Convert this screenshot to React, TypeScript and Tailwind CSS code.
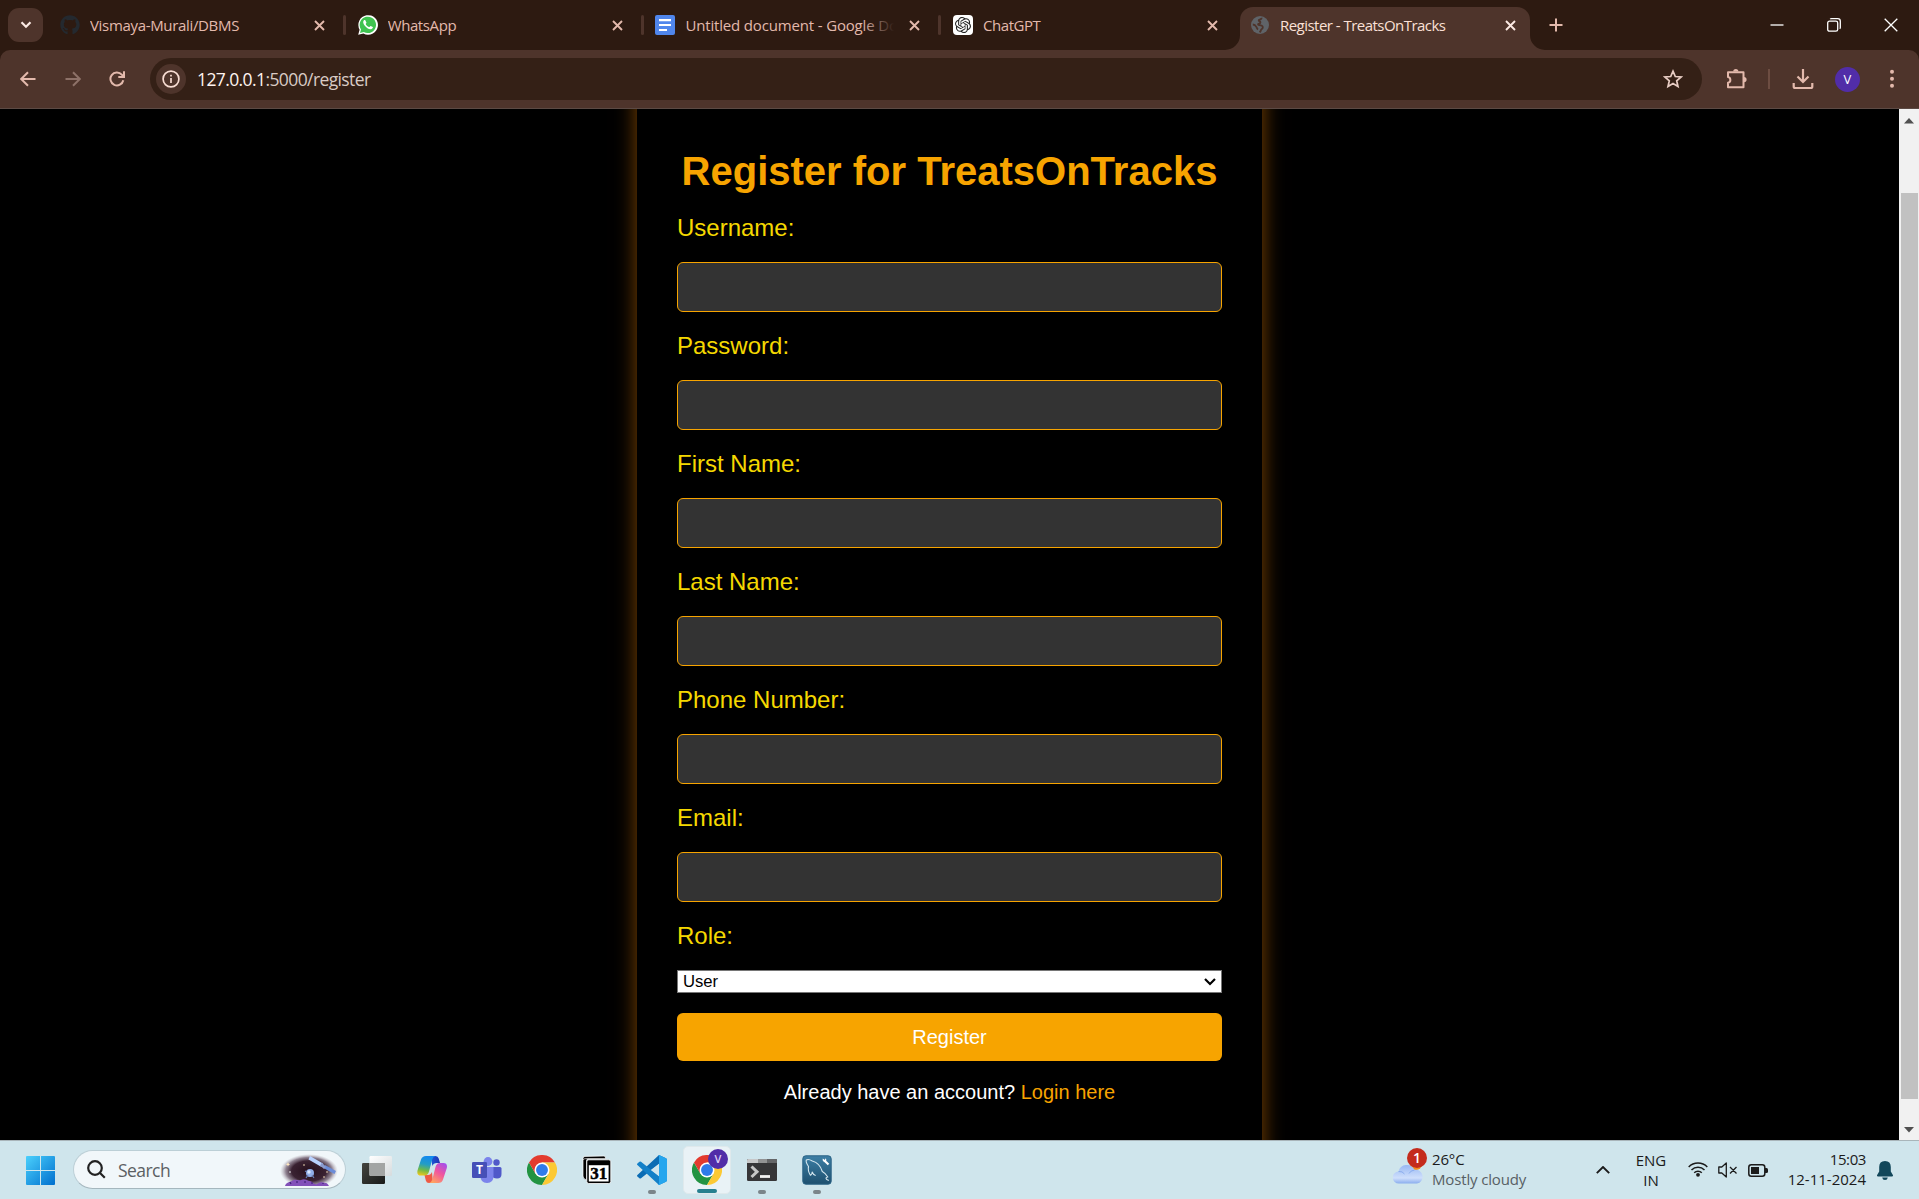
import React from "react";
import { FaGithub } from "react-icons/fa";
import { SiOpenai } from "react-icons/si";

const uiFont = "font-['Open_Sans','Noto_Sans',sans-serif]";
const pageFont = "font-['Liberation_Sans',Arial,sans-serif]";

function Cross({ className }: { className: string }) {
  return (
    <svg className={className} width="11" height="11" viewBox="0 0 11 11" fill="none" stroke="currentColor" strokeWidth="1.9">
      <path d="M1 1l9 9M10 1l-9 9" />
    </svg>
  );
}

function WhatsAppIcon() {
  return (
    <svg width="20" height="20" viewBox="0 0 20 20">
      <path d="M0.2 19.8l1.4-5.1A9.8 9.8 0 1 1 5.400 18.500z" fill="#fff" />
      <path d="M2 18l1-3.600A8.200 8.200 0 1 1 5.800 17z" fill="#3fc350" />
      <path d="M7.300 5.300c-.3-.5-1-.5-1.400 0-1.300 1.400-.7 3.500.9 5.500 1.800 2.300 4.700 4.200 6.800 3.300 1-.5 1.500-1.700 1.200-2.100l-2.100-1.100c-.6-.1-.9 1.200-1.500 1.200-1.100-.2-3.200-2.100-3.500-3.200 0-.5.900-.9.700-1.500z" fill="#fff" />
    </svg>
  );
}

function DocsIcon() {
  return (
    <svg width="20" height="20" viewBox="0 0 20 20">
      <rect width="20" height="20" rx="2" fill="#5086ec" />
      <path d="M4 5.200h12M4 10h12M4 15h8" stroke="#fff" strokeWidth="2.200" />
    </svg>
  );
}

function GlobeIcon() {
  return (
    <svg width="18" height="18" viewBox="0 0 18 18">
      <circle cx="9" cy="9" r="9" fill="#5f6368" />
      <path d="M10.500 1.800c.3 1.200-.8 1.500-2 1.900-1.300.4-.8 1.500.2 1.700 1.300.3.600 2.200-.6 2.300-1.500.1-1.300 1.400 0 1.500 2.300.1 3.800.5 3.700 2.300-.1 1.600-1.600 1.200-1.900 2.700-.2.900-.6 1.500-1.300 2.200M1.800 8.500c1.600 0 3 1.300 3.700 2.600.5 1 .6 1.900 1.600 2.400" fill="none" stroke="#4e342b" strokeWidth="1.800" />
    </svg>
  );
}

function Tab({ icon, title, fade, divider = true, track }: { icon: React.ReactNode; title: string; fade?: boolean; divider?: boolean; track: string }) {
  return (
    <div className="flex h-[50px] w-[297.700px] shrink-0 items-center">
      <div className="flex w-5 justify-center">{icon}</div>
      <div className="relative ml-[10px] w-[209px] overflow-hidden text-[15px] leading-5 whitespace-nowrap text-[#e3b9ac]">
        <span className={track}>{title}</span>
        {fade && <div className="absolute top-0 right-0 h-5 w-8 bg-gradient-to-r from-transparent to-[#2d1a11]" />}
      </div>
      <Cross className="ml-[15px] shrink-0 text-[#e3b9ac]" />
      {divider && <div className="ml-[18px] h-5 w-[3px] rounded-full bg-[#4e342b]" />}
    </div>
  );
}

function TabStrip() {
  return (
    <div className="flex h-[50px] bg-[#2d1a11] pl-2">
      <button className="mt-2 flex h-[34px] w-[35px] items-center justify-center rounded-[11px] bg-[#4e342b]">
        <svg width="12" height="8" viewBox="0 0 12 8" fill="none" stroke="#fbe9e3" strokeWidth="2.200">
          <path d="M1.500 1.300L6 5.800l4.500-4.500" />
        </svg>
      </button>
      <div className="ml-[17px] flex w-[1180px]">
        <Tab icon={<FaGithub size={20} color="#24292f" />} title="Vismaya-Murali/DBMS" track="tracking-[-0.33px]" />
        <Tab icon={<WhatsAppIcon />} title="WhatsApp" track="tracking-[-0.4px]" />
        <Tab icon={<DocsIcon />} title="Untitled document - Google Do" fade track="tracking-[-0.16px]" />
        <Tab
          icon={
            <div className="flex size-5 shrink-0 items-center justify-center rounded-[4px] bg-white">
              <SiOpenai size={16} color="#222" />
            </div>
          }
          title="ChatGPT"
          divider={false}
          track="tracking-[-0.45px]"
        />
      </div>
      <div className="relative mt-[7px] flex h-[43px] w-[290px] items-center rounded-t-[13px] bg-[#4e342b] pb-[7px] pl-[11px]">
        <svg className="absolute bottom-0 -left-[15px]" width="15" height="15" viewBox="0 0 15 15">
          <path d="M15 0v15H0A15 15 0 0 0 15 0z" fill="#4e342b" />
        </svg>
        <svg className="absolute -right-[15px] bottom-0" width="15" height="15" viewBox="0 0 15 15">
          <path d="M0 0v15h15A15 15 0 0 1 0 0z" fill="#4e342b" />
        </svg>
        <GlobeIcon />
        <div className="ml-[11px] w-[225px] text-[15px] leading-5 tracking-[-0.53px] whitespace-nowrap text-[#fbe0d6]">Register - TreatsOnTracks</div>
        <Cross className="text-[#fbe9e3]" />
      </div>
      <svg className="mt-[18px] ml-[19px]" width="14" height="14" viewBox="0 0 14 14" stroke="#e3b9ac" strokeWidth="2">
        <path d="M7 .5v13M.5 7h13" />
      </svg>
      <div className="mr-[21px] ml-auto flex h-[49px] items-center gap-[43px] text-white">
        <svg width="14" height="14" viewBox="0 0 14 14" stroke="currentColor" strokeWidth="1.300">
          <path d="M.5 7h13" />
        </svg>
        <svg width="14" height="14" viewBox="0 0 14 14" fill="none" stroke="currentColor" strokeWidth="1.300">
          <rect x=".7" y="3.200" width="10" height="10" rx="1.800" />
          <path d="M3.200 1.200Q3.600.7 4.500.7h6.200q2.600 0 2.600 2.600v6.300q0 .8-.6 1.200" />
        </svg>
        <svg width="14" height="14" viewBox="0 0 14 14" stroke="currentColor" strokeWidth="1.300">
          <path d="M.7.700l12.600 12.600M13.300.700L.7 13.300" />
        </svg>
      </div>
    </div>
  );
}

function Toolbar() {
  return (
    <div className="bg-[#2d1a11]">
      <div className="flex h-[59px] items-center rounded-t-[10px] border-b border-[#5c4a44] bg-[#4e342b] pl-5">
        <svg width="16" height="16" viewBox="0 0 16 16" fill="none" stroke="#e3b9ac" strokeWidth="2">
          <path d="M15.500 8H1.500M8 1.200L1.200 8 8 14.800" />
        </svg>
        <svg className="ml-[29px]" width="16" height="16" viewBox="0 0 16 16" fill="none" stroke="#8d7168" strokeWidth="2">
          <path d="M.5 8h14M8 1.200L14.800 8 8 14.800" />
        </svg>
        <svg className="ml-[28px]" width="16" height="16" viewBox="0 0 16 16" fill="none" stroke="#e3b9ac" strokeWidth="2">
          <path d="M14.300 9.300A6.500 6.500 0 1 1 12.800 3.600L14.500 5.600M15 .3v5.700H9.300" />
        </svg>
        <div className="ml-[25px] flex h-[42px] w-[1552px] items-center rounded-full bg-[#342016] pl-[6px]">
          <div className="flex size-[30px] items-center justify-center rounded-full bg-[#4e342b]">
            <svg width="18" height="18" viewBox="0 0 18 18" fill="none" stroke="#f8ddd3" strokeWidth="1.700">
              <circle cx="9" cy="9" r="7.900" />
              <path d="M9 8v5M9 4.700v1.900" />
            </svg>
          </div>
          <div className="ml-[11px] text-[17.500px] leading-6 tracking-[-0.6px] text-[#d9cbc5]">
            <span className="text-[#fff4f0]">127.0.0.1</span>:5000/register
          </div>
          <svg className="mr-[19px] ml-auto" width="20" height="20" viewBox="0 0 20 20" fill="none" stroke="#e8cdc4" strokeWidth="1.700">
            <path d="M10 2.200l2.300 5.300 5.800.5-4.400 3.800 1.300 5.700-5-3-5 3 1.300-5.700L1.900 8l5.800-.5z" />
          </svg>
        </div>
        <svg className="ml-[24px]" width="22" height="22" viewBox="0 0 22 22">
          <path d="M2 4.300h15.500v14.900H2v-4.400a2.900 2.900 0 0 0 0-5.700z" fill="none" stroke="#e3b9ac" strokeWidth="2" strokeLinejoin="round" />
          <path d="M7.200 3.600a2.600 2.600 0 0 1 5.200 0zM18 9a2.600 2.600 0 0 1 0 5.200z" fill="#e3b9ac" />
        </svg>
        <div className="ml-[20px] h-5 w-[2px] bg-[#6d4d42]" />
        <svg className="ml-[22px]" width="22" height="22" viewBox="0 0 22 22" fill="none" stroke="#e3b9ac" strokeWidth="2.200">
          <path d="M11 1v12.500M5.500 8.500l5.500 5.500 5.500-5.500M1.700 15v3.500q0 1.500 1.500 1.500h15.600q1.500 0 1.500-1.500V15" />
        </svg>
        <div className="ml-[21px] flex size-[25px] items-center justify-center rounded-full bg-[#512da8] text-[13px] leading-none text-white">V</div>
        <svg className="ml-[30px]" width="4" height="20" viewBox="0 0 4 20" fill="#e3b9ac">
          <circle cx="2" cy="2.800" r="2" />
          <circle cx="2" cy="9.800" r="2" />
          <circle cx="2" cy="16.800" r="2" />
        </svg>
      </div>
    </div>
  );
}

const fields = [
  { label: "Username:", type: "text" },
  { label: "Password:", type: "password" },
  { label: "First Name:", type: "text" },
  { label: "Last Name:", type: "text" },
  { label: "Phone Number:", type: "text" },
  { label: "Email:", type: "email" },
];

function RegisterPage() {
  return (
    <div className={`flex h-[1031px] overflow-hidden bg-black ${pageFont}`}>
      <main className="flex flex-1 justify-center overflow-hidden">
        <div className="-my-10 w-[625px] bg-black px-10 pt-[79px] shadow-[0_0_20px_rgba(255,140,0,0.5)]">
          <h1 className="text-center text-[40px] leading-[46px] font-bold whitespace-nowrap text-[#f7a400]">Register for TreatsOnTracks</h1>
          <form className="mt-5">
            {fields.map((field) => (
              <label key={field.label} className="mb-5 block">
                <span className="block h-12 text-[24px] leading-7 text-[#f5d800]">{field.label}</span>
                <input type={field.type} className="block h-[50px] w-full rounded-[6px] border border-[#f7a400] bg-[#333] px-3 text-white" />
              </label>
            ))}
            <label className="block">
              <span className="block h-12 text-[24px] leading-7 text-[#f5d800]">Role:</span>
              <span className="relative block">
                <select className="block h-[23px] w-full appearance-none border border-[#767676] bg-white pl-[5px] text-[16.670px] leading-[21px] text-black">
                  <option>User</option>
                </select>
                <svg className="pointer-events-none absolute top-[8px] right-[6px]" width="12" height="8" viewBox="0 0 12 8" fill="none" stroke="#000" strokeWidth="2.200">
                  <path d="M1 1l5 5 5-5" />
                </svg>
              </span>
            </label>
            <button type="button" className="mt-5 block h-12 w-full rounded-[6px] bg-[#f7a400] text-[20px] text-white">
              Register
            </button>
          </form>
          <p className="mt-5 text-center text-[20px] leading-[23px] text-white">
            Already have an account? <a className="text-[#f7a400]">Login here</a>
          </p>
        </div>
      </main>
      <div className="flex w-5 flex-col items-center bg-[#f1f1f1]">
        <svg className="mt-[9px]" width="10" height="6" viewBox="0 0 10 6" fill="#505050">
          <path d="M5 0l5 5.500H0z" />
        </svg>
        <div className="mt-[69px] ml-px h-[906px] w-[17px] bg-[#c1c1c1]" />
        <svg className="mt-[28px]" width="10" height="6" viewBox="0 0 10 6" fill="#505050">
          <path d="M0 0h10L5 5.500z" />
        </svg>
      </div>
    </div>
  );
}

function ChromeLogo() {
  return (
    <svg width="30" height="30" viewBox="0 0 48 48">
      <path d="M24 48A24 24 0 0 1 3.200 12l10.400 18L24 35.500l10.400-5.500z" fill="#229342" />
      <path d="M3.200 12A24 24 0 0 1 44.800 12H24L13.600 30z" fill="#e33b2e" />
      <path d="M34.400 30L24 48A24 24 0 0 0 44.800 12H24z" fill="#fcc934" />
      <circle cx="24" cy="24" r="12" fill="#fff" />
      <circle cx="24" cy="24" r="9.500" fill="#2f7bea" />
    </svg>
  );
}

function SearchArt() {
  return (
    <svg width="58" height="32" viewBox="0 0 58 32">
      <defs>
        <radialGradient id="space">
          <stop offset="0" stopColor="#26101c" />
          <stop offset=".6" stopColor="#3a2232" />
          <stop offset=".8" stopColor="#6d5a6c" stopOpacity=".75" />
          <stop offset="1" stopColor="#b5aab5" stopOpacity="0" />
        </radialGradient>
      </defs>
      <ellipse cx="29" cy="17" rx="29" ry="17" fill="url(#space)" />
      <path d="M5 32c1-4 5-4 7-5 3-3 6 0 9-1 4-2 6 1 9 1 3 1 4 4 7 3 3-2 6-2 8-1 3 0 3 2 4 3z" fill="#8250b9" />
      <path d="M10 28l1 2M17 27v2M25 27v2M32 28v2M43 29v1" stroke="#40217a" strokeWidth="1.200" />
      <path d="M30 2l13 7.500-1.500 3.500-13-7.500z" fill="#b9d2ff" />
      <path d="M45 11l11 6-1.500 3-11-6z" fill="#6b8cd8" />
      <path d="M42 8.500l4 4.500-2 2-4-3.500z" fill="#8b9cce" />
      <circle cx="30" cy="19" r="4" fill="#91aee8" />
      <path d="M26 24l2-3M34 24l-2-3M25 17l2 1" stroke="#6881b8" strokeWidth="1.200" />
      <circle cx="29" cy="18" r="1.700" fill="#dbe8ff" />
      <path d="M8 8.300l.7 1.400 1.400.7-1.400.7L8 12.500l-.7-1.400-1.400-.7 1.400-.7z" fill="#ffe8c0" />
      <circle cx="24" cy="11" r=".8" fill="#ffe8c0" />
      <circle cx="10" cy="18" r=".8" fill="#fff" />
      <circle cx="47" cy="18" r=".8" fill="#ffe8c0" />
      <circle cx="44" cy="23" r=".8" fill="#ffe8c0" />
    </svg>
  );
}

function TaskViewIcon() {
  return (
    <svg width="30" height="30" viewBox="0 0 30 30">
      <defs>
        <linearGradient id="tv" x1="0" y1="0" x2="1" y2="1">
          <stop offset="0" stopColor="#44443f" />
          <stop offset="1" stopColor="#191a19" />
        </linearGradient>
        <linearGradient id="tvw" x1="0" y1="0" x2="1" y2="1">
          <stop offset="0" stopColor="#fff" />
          <stop offset="1" stopColor="#d6dbdd" />
        </linearGradient>
      </defs>
      <rect x="0" y="8" width="23" height="21" rx="1.200" fill="url(#tv)" />
      <rect x="7.500" y="1" width="22.500" height="20" rx="1.200" fill="url(#tvw)" />
      <path d="M7.500 8H23v13H8.700q-1.200 0-1.200-1.200z" fill="#a3a5a4" />
    </svg>
  );
}

function CopilotIcon() {
  return (
    <svg width="30" height="30" viewBox="0 0 30 30">
      <defs>
        <linearGradient id="cpa" x1=".4" y1="0" x2=".2" y2="1">
          <stop offset="0" stopColor="#1389ee" />
          <stop offset=".4" stopColor="#239dc5" />
          <stop offset=".7" stopColor="#6cb94a" />
          <stop offset="1" stopColor="#f2c719" />
        </linearGradient>
        <linearGradient id="cpb" x1=".9" y1="0" x2=".3" y2="1">
          <stop offset="0" stopColor="#a04df0" />
          <stop offset=".5" stopColor="#f0559e" />
          <stop offset="1" stopColor="#ffa261" />
        </linearGradient>
        <linearGradient id="cpc">
          <stop offset="0" stopColor="#1b58d8" />
          <stop offset="1" stopColor="#2032b0" />
        </linearGradient>
      </defs>
      <path d="M14 1h4.500q2.500 0 3.200 2.500L23 8h-3.500q-3 0-4.200 3z" fill="url(#cpc)" />
      <path d="M16 28h-4q-2.500 0-3.200-2.500L7.500 20H11q2.800 0 4-3z" fill="#ee5a45" />
      <path d="M9 1h9.500q-2.500.5-3.300 3.500L12 16.500Q11 20.500 7.500 20.500H4q-4.500 0-3.500-5L4 4.500Q5.200 1 9 1z" fill="url(#cpa)" />
      <path d="M21 28h-9q2.500-.5 3.300-3.500L18.500 12q1-4 4.500-4h3.300q4.500 0 3.500 5L26 24.500Q25 28 21 28z" fill="url(#cpb)" />
    </svg>
  );
}

function TeamsIcon() {
  return (
    <svg width="30" height="30" viewBox="0 0 30 30">
      <circle cx="24.500" cy="7.500" r="3.200" fill="#5059c9" />
      <path d="M20 12h8q1.500 0 1.500 1.500V19q0 4.500-4.500 4.500T20 20z" fill="#5059c9" />
      <circle cx="16" cy="6.500" r="4.400" fill="#7b83eb" />
      <path d="M9 12h12.500v9q0 7-6.500 7t-6.500-7z" fill="#7b83eb" />
      <rect x="0" y="7" width="15" height="16" rx="1.300" fill="#4650b8" />
      <text x="7.500" y="19.200" textAnchor="middle" className="font-['Open_Sans'] text-[12px] font-bold" fill="#fff">T</text>
    </svg>
  );
}

function CalendarIcon() {
  return (
    <svg width="30" height="30" viewBox="0 0 30 30">
      <path d="M1 3.500Q1 1.500 3 1.400L22 1q1.500 0 1.500 2v1H6Q4.500 4 4.500 6v19Q1 24 1 21z" fill="#000" stroke="#fff" strokeWidth=".7" />
      <path d="M1 4.800Q2 3.600 4 3.600h19" fill="none" stroke="#fff" strokeWidth=".6" />
      <rect x="4.800" y="4.800" width="24" height="23.700" rx="2" fill="#000" stroke="#fff" strokeWidth=".8" />
      <path d="M6.800 10.200h19.800V26.500H6.800z" fill="#fff" />
      <text x="16.700" y="24" textAnchor="middle" className="font-['Liberation_Serif'] text-[17px] font-bold" stroke="#000" strokeWidth=".5">31</text>
    </svg>
  );
}

function VsCodeIcon() {
  return (
    <svg width="30" height="30" viewBox="0 0 30 30">
      <path d="M22 0l7 3.300q1 .5 1 1.700l-8 4L4 23.200q-.8.600-1.600 0L.4 21.500q-.8-.8 0-1.600z" fill="#0b6cb4" />
      <path d="M22 30l7-3.300q1-.5 1-1.700l-8-4L4 6.800q-.8-.6-1.600 0L.4 8.500q-.8.800 0 1.600z" fill="#1380c8" />
      <path d="M22 0l7 3.300q1 .5 1 1.700v20q0 1.200-1 1.700L22 30q-1 0-1.300-.6 1.300.6 1.300-.8V1.400q0-1.400-1.300-.8Q21 0 22 0z" fill="#26a6ee" />
      <path d="M22 8.800v12.400L13.800 15z" fill="#d0e6ee" />
    </svg>
  );
}

function TerminalIcon() {
  return (
    <svg width="30" height="30" viewBox="0 0 30 30">
      <rect x="0" y="4" width="30" height="22" rx="1.300" fill="#363638" />
      <path d="M0 8V5.300Q0 4 1.300 4H11v4z" fill="#c7c8c9" />
      <path d="M11 4h9v4h-9z" fill="#929394" />
      <path d="M20 4h8.700Q30 4 30 5.300V8H20z" fill="#656668" />
      <path d="M4.500 11.500l5.500 5.300-5.500 5.200" fill="none" stroke="#c6c6c6" strokeWidth="3" />
      <path d="M13 21.500h10" stroke="#f2f2f2" strokeWidth="2.800" />
    </svg>
  );
}

function MySqlIcon() {
  return (
    <svg width="30" height="30" viewBox="0 0 30 30">
      <defs>
        <linearGradient id="ms" x1="0" y1="0" x2="0" y2="1">
          <stop offset="0" stopColor="#3d7fa5" />
          <stop offset="1" stopColor="#1e506f" />
        </linearGradient>
      </defs>
      <rect x=".8" y=".8" width="28.400" height="28.400" rx="3" fill="url(#ms)" stroke="#2a6285" />
      <path d="M8.500 20.500q-3-5-2-9Q3.500 7 4.300 5q2-1.500 6 1 7.500 2 10 10.500 3 1.500 5.500 5.500-3 .5-1 2.500l2 1M8.500 20.500q1.500-1 1.700-3.500 1 3 3.500 3.500" fill="none" stroke="#d5e7ef" strokeWidth="1.100" strokeLinejoin="round" />
      <path d="M22.300 5.500l4.200 4" fill="none" stroke="#fff" strokeWidth="2.200" />
      <path d="M20.800 3.500q-.8 2 .8 3 1.600.6 2.600-.7.600-1.600-.7-2.600l-.6 1.800z" fill="#fff" />
    </svg>
  );
}

function TaskItem({ children, running }: { children: React.ReactNode; running?: boolean }) {
  return (
    <div className="relative flex h-12 w-[55px] shrink-0 justify-center pt-[9px]">
      {children}
      {running && <div className="absolute bottom-0 left-[23px] h-1 w-2 rounded-full bg-[#7b858a]" />}
    </div>
  );
}

function Taskbar() {
  return (
    <div className="flex h-[59px] items-start border-t border-[#a9b5ba] bg-[#cfe5ec] pt-[5px] pl-[26px] text-[#1b1b1b]">
      <svg className="mt-[10px] shrink-0" width="29" height="29" viewBox="0 0 29 29">
        <defs>
          <linearGradient id="win" x1="0" y1="0" x2="29" y2="29" gradientUnits="userSpaceOnUse">
            <stop offset="0" stopColor="#4bd0fc" />
            <stop offset="1" stopColor="#006fce" />
          </linearGradient>
        </defs>
        <path d="M1 0h13v14H0V1Q0 0 1 0zM15 0h13q1 0 1 1v13H15zM0 15h14v14H1q-1 0-1-1zM15 15h14v13q0 1-1 1H15z" fill="url(#win)" />
      </svg>
      <div className="mt-[4px] ml-[18px] flex h-[39px] w-[273px] shrink-0 items-center rounded-full border border-b-[#a5b7be] border-[#bccfd6] bg-[#f1f7fa] pl-[13px]">
        <svg width="19" height="19" viewBox="0 0 19 19" fill="none" stroke="#222" strokeWidth="2.200">
          <circle cx="8" cy="8" r="6.800" />
          <path d="M12.800 12.800l5 5" />
        </svg>
        <div className="ml-[12px] text-[17.500px] leading-6 tracking-[-0.55px] text-[#5b6063]">Search</div>
        <div className="mr-[7px] ml-auto">
          <SearchArt />
        </div>
      </div>
      <div className="ml-[3.500px] flex">
        <TaskItem><TaskViewIcon /></TaskItem>
        <TaskItem><CopilotIcon /></TaskItem>
        <TaskItem><TeamsIcon /></TaskItem>
        <TaskItem><ChromeLogo /></TaskItem>
        <TaskItem><CalendarIcon /></TaskItem>
        <TaskItem running><VsCodeIcon /></TaskItem>
        <div className="relative mx-[3.500px] flex h-12 w-12 shrink-0 justify-center rounded-[5px] border border-[#dfe9ec] bg-[#e9f2f6] pt-2">
          <ChromeLogo />
          <div className="absolute top-[2px] right-[2px] flex size-5 items-center justify-center rounded-full bg-[#512da8] text-[11px] font-semibold text-[#ddd0f5]">V</div>
          <div className="absolute bottom-0 left-[13px] h-1 w-5 rounded-full bg-[#26808f]" />
        </div>
        <TaskItem running><TerminalIcon /></TaskItem>
        <TaskItem running><MySqlIcon /></TaskItem>
      </div>

      <div className="mr-[26px] ml-auto flex h-12 text-[15px] leading-5">
        <div className="relative mt-[17px] mr-[9px] h-[21px] w-[30px]">
          <svg className="absolute top-0 left-0" width="30" height="21" viewBox="0 0 30 21">
            <defs>
              <linearGradient id="cl" x1="0" y1="0" x2="0" y2="1">
                <stop offset="0" stopColor="#98b8f3" />
                <stop offset=".7" stopColor="#cfdffc" />
                <stop offset="1" stopColor="#8aadee" />
              </linearGradient>
            </defs>
            <circle cx="23" cy="1" r="6" fill="#f28c1c" />
            <path d="M6 20.500a6 6 0 0 1-.5-12A8.500 8.500 0 0 1 21.500 7 6.800 6.800 0 0 1 24 20.500z" fill="url(#cl)" />
            <path d="M5.500 8.500q4-.5 6 2.500M21.500 7q-4 .5-5.500 3.500" stroke="#7fa3ea" strokeWidth=".8" fill="none" />
          </svg>
          <div className="absolute -top-[15px] left-[14px] flex size-5 items-center justify-center rounded-full bg-[#c42b1c] text-[14px] font-semibold text-white">1</div>
        </div>
        <div className="mt-[3px] w-[164px] tracking-[-0.15px] whitespace-nowrap">
          <div>26°C</div>
          <div className="text-[#586064]">Mostly cloudy</div>
        </div>
        <svg className="mt-[20px]" width="14" height="8" viewBox="0 0 14 8" fill="none" stroke="currentColor" strokeWidth="1.900">
          <path d="M.8 7.200L7 1l6.200 6.200" />
        </svg>
        <div className="mt-[4px] ml-[22px] w-[38px] text-center">
          <div>ENG</div>
          <div>IN</div>
        </div>
        <svg className="mt-[15px] ml-[18px]" width="20" height="16" viewBox="0 0 20 16" fill="none" stroke="currentColor" strokeWidth="1.500">
          <path d="M.7 6a13 13 0 0 1 18.600 0M3.500 9a9.200 9.200 0 0 1 13 0M6.200 11.800a5.400 5.400 0 0 1 7.600 0" />
          <circle cx="10" cy="13.800" r="1.900" fill="currentColor" stroke="none" />
        </svg>
        <svg className="mt-[16px] ml-[10px]" width="20" height="16" viewBox="0 0 20 16" fill="none" stroke="currentColor" strokeWidth="1.300">
          <path d="M.8 5h3L8.300 1v14L3.800 11h-3zM12 5l6.500 6.500M18.500 5L12 11.500" strokeLinejoin="round" />
        </svg>
        <svg className="mt-[18px] ml-[10px]" width="20" height="13" viewBox="0 0 20 13">
          <rect x=".8" y=".8" width="16" height="11.400" rx="2.500" fill="none" stroke="currentColor" strokeWidth="1.500" />
          <path d="M3 3h8v7H3z" fill="currentColor" />
          <path d="M17 4h1.500q1.500 0 1.500 1.500v2Q20 9 18.500 9H17z" fill="currentColor" />
        </svg>
        <div className="mt-[3px] ml-[12px] w-[86px] text-right whitespace-nowrap">
          <div className="tracking-[-0.4px]">15:03</div>
          <div>12-11-2024</div>
        </div>
        <svg className="mt-[15px] ml-[11px]" width="16" height="19" viewBox="0 0 16 19" fill="#12475a">
          <path d="M8 0q5.800 0 5.800 6v4.500L16 14.200q.2 1.300-1 1.300H1q-1.200 0-1-1.300l2.200-3.700V6Q2.200 0 8 0zM5.200 16.500h5.600Q10.500 19 8 19t-2.800-2.500z" />
        </svg>
      </div>
    </div>
  );
}

export default function App() {
  return (
    <div className={`h-[1199px] w-[1919px] overflow-hidden bg-black ${uiFont}`}>
      <TabStrip />
      <Toolbar />
      <RegisterPage />
      <Taskbar />
    </div>
  );
}
